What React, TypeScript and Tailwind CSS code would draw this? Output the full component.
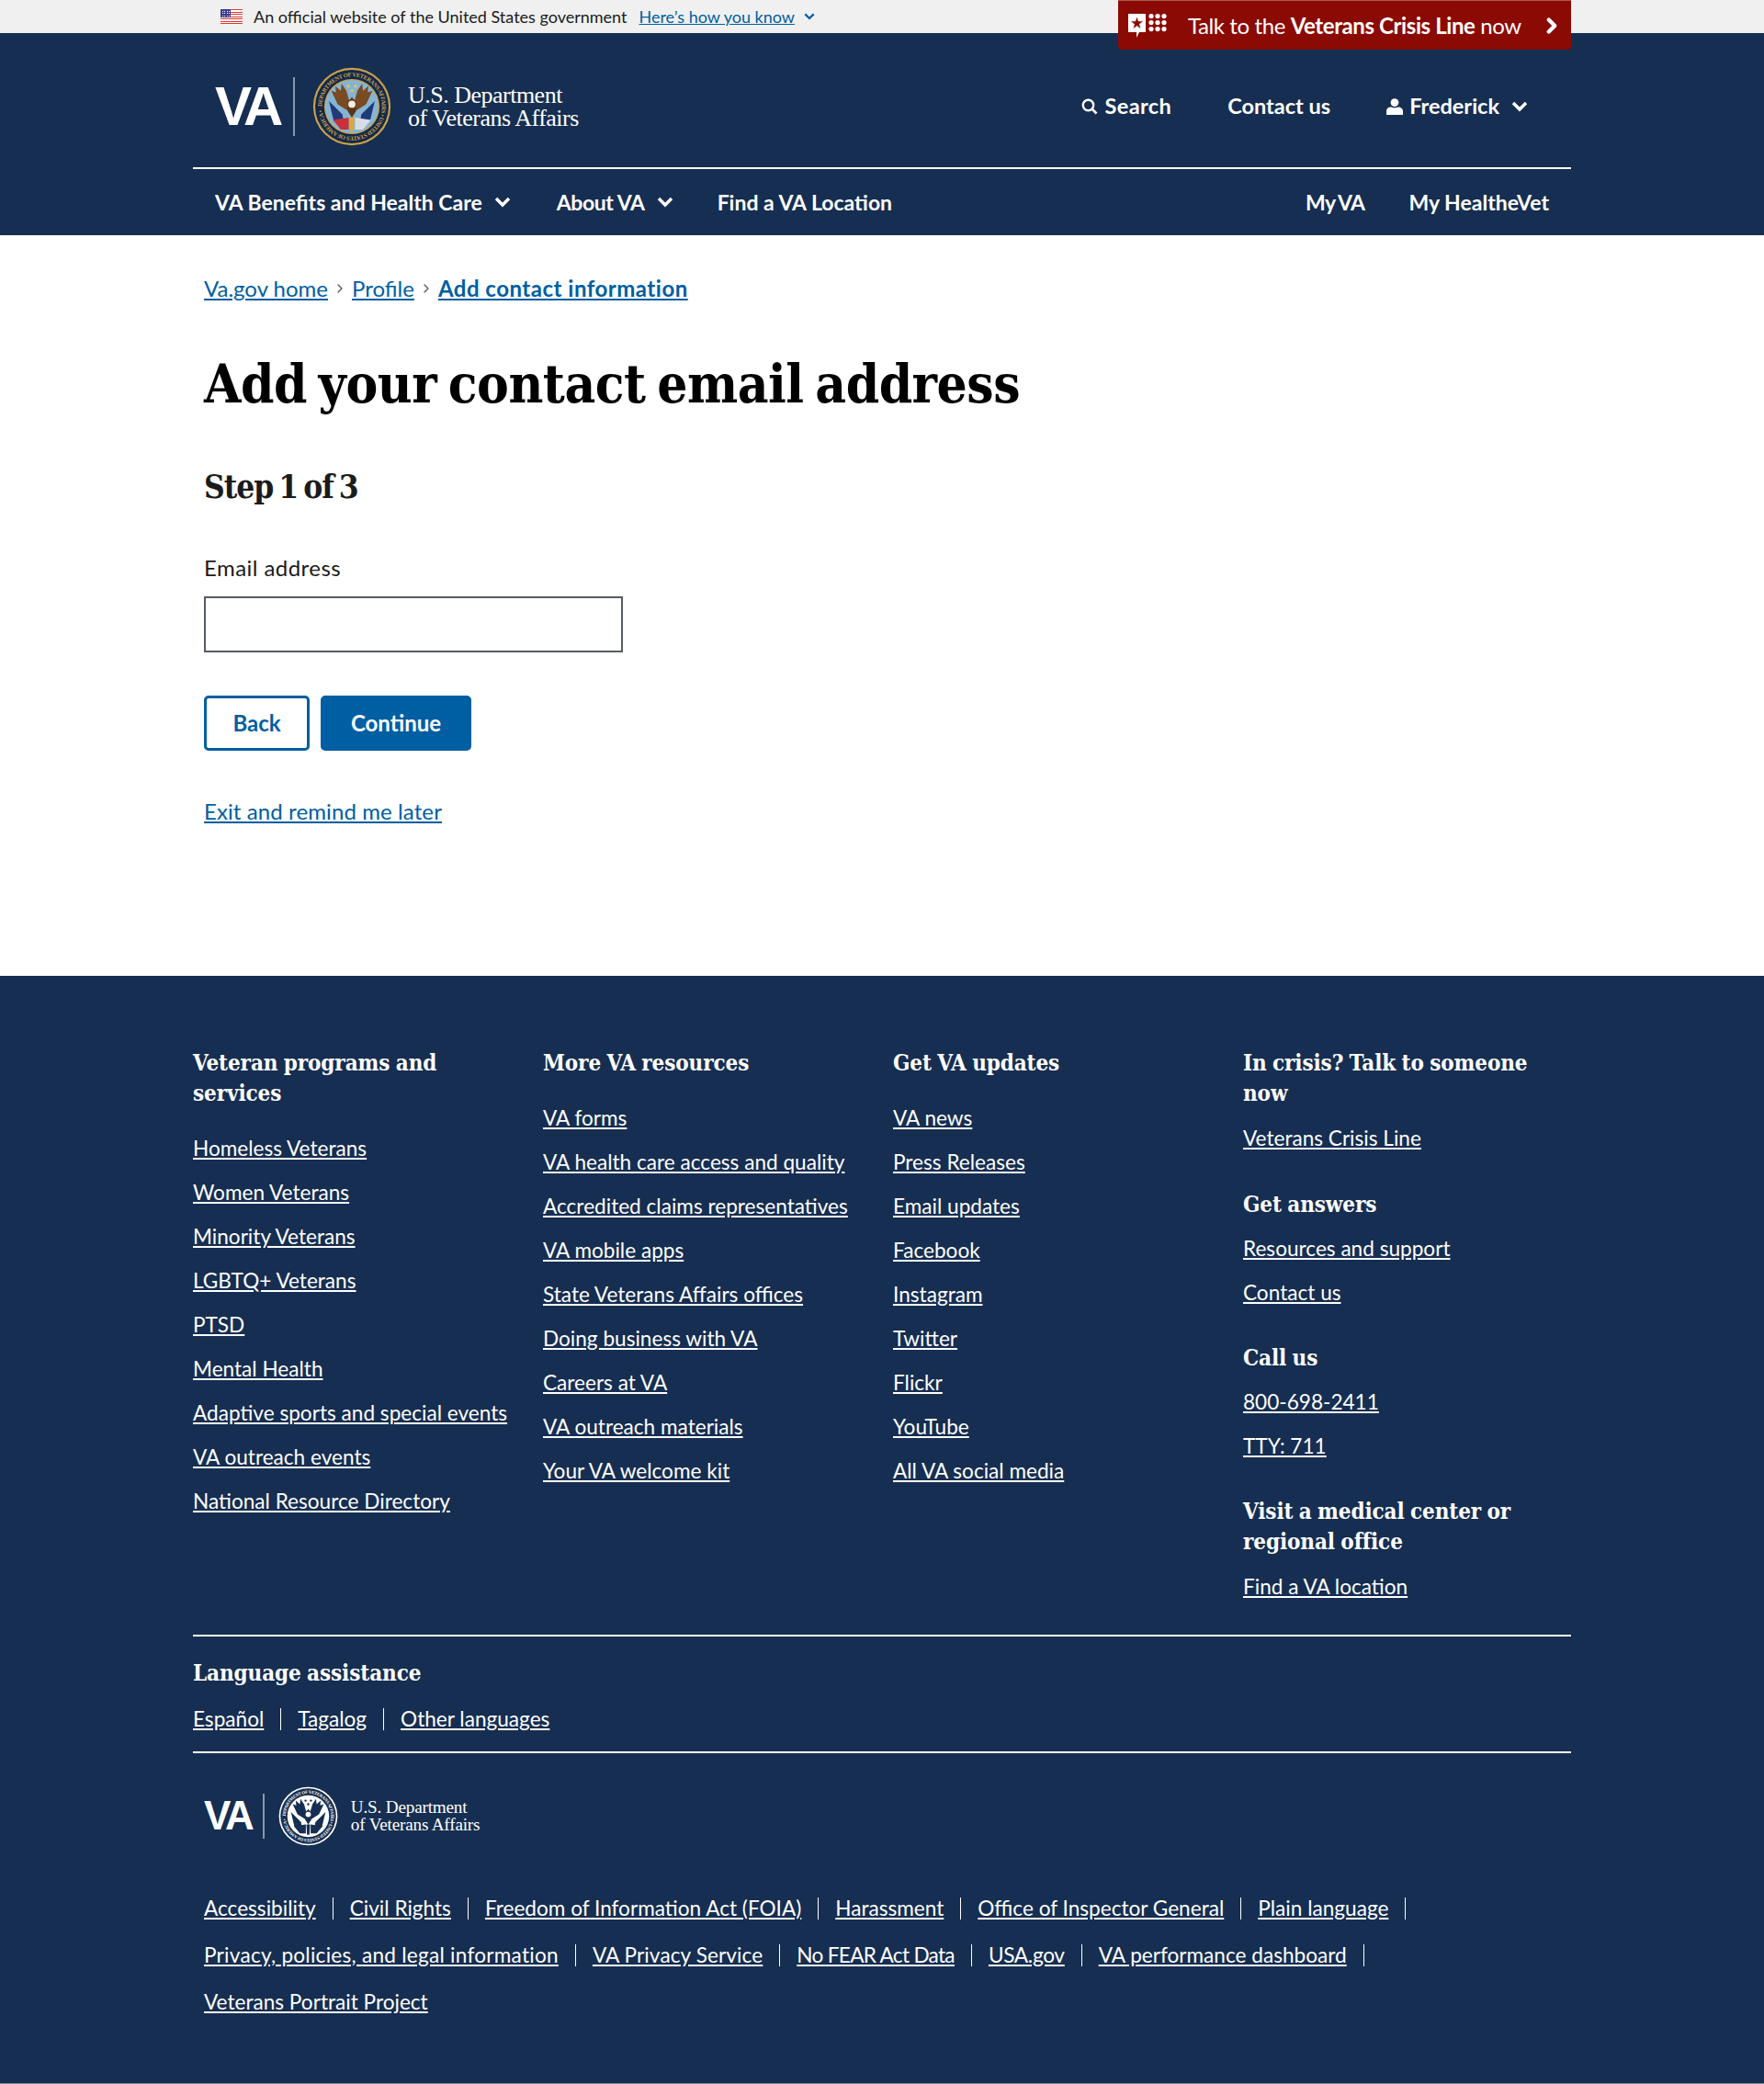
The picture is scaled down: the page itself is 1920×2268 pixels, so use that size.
import React from 'react';
import { ChevronRight } from 'lucide-react';

const SANS = "font-['Lato','Noto_Sans',sans-serif]";
const SERIF = "font-['DejaVu_Serif_Condensed','DejaVu_Serif',serif]";
const LOGO_SERIF = "font-['Liberation_Serif',serif]";

const programs = ['Homeless Veterans', 'Women Veterans', 'Minority Veterans', 'LGBTQ+ Veterans', 'PTSD', 'Mental Health', 'Adaptive sports and special events', 'VA outreach events', 'National Resource Directory'];
const resources = ['VA forms', 'VA health care access and quality', 'Accredited claims representatives', 'VA mobile apps', 'State Veterans Affairs offices', 'Doing business with VA', 'Careers at VA', 'VA outreach materials', 'Your VA welcome kit'];
const updates = ['VA news', 'Press Releases', 'Email updates', 'Facebook', 'Instagram', 'Twitter', 'Flickr', 'YouTube', 'All VA social media'];
const legal = [
  ['Accessibility', 'Civil Rights', 'Freedom of Information Act (FOIA)', 'Harassment', 'Office of Inspector General', 'Plain language'],
  ['Privacy, policies, and legal information', 'VA Privacy Service', 'No FEAR Act Data', 'USA.gov', 'VA performance dashboard'],
];
// Lato runs a bit narrow or wide on these compared with the original face
const legalFit: Record<string, string> = {
  'Privacy, policies, and legal information': 'tracking-[0.25px]',
  'VA Privacy Service': 'tracking-[0.1px]',
  'No FEAR Act Data': 'tracking-[-0.7px]',
  'USA.gov': 'tracking-[-0.3px]',
};

const FootHeading = ({ children, className = '' }: { children: React.ReactNode; className?: string }) => (
  <h2 className={`${SERIF} text-[24px] font-bold leading-[33px] tracking-[-0.1px] [word-spacing:-1px] text-white ${className}`}>{children}</h2>
);

const FootLink = ({ children }: { children: React.ReactNode }) => (
  <li className="flex h-12 items-center pb-[1px]">
    <a className="text-[22.6px] text-white underline underline-offset-2 whitespace-nowrap">{children}</a>
  </li>
);

const FootColumn = ({ title, links }: { title: React.ReactNode; links: string[] }) => (
  <div>
    <FootHeading>{title}</FootHeading>
    <ul className="mt-5">
      {links.map((l) => <FootLink key={l}>{l}</FootLink>)}
    </ul>
  </div>
);

const Chev = ({ className = '' }: { className?: string }) => (
  <svg width="18" height="12" viewBox="0 0 18 12" className={className}>
    <path d="M2 2 L9 9 L16 2" fill="none" stroke="currentColor" strokeWidth="3.4" />
  </svg>
);

const Seal = ({ mono, size }: { mono?: boolean; size: number }) => {
  const ring = mono ? '#ffffff' : '#c9a24a';
  const band = mono ? '#162e51' : '#14284a';
  const inner = mono ? '#ffffff' : '#86b4d4';
  const wing = mono ? '#162e51' : '#7a4a22';
  const id = mono ? 'seal-mono' : 'seal-color';
  return (
    <svg width={size} height={size} viewBox="0 0 100 100">
      <circle cx="50" cy="50" r="49" fill={ring} />
      <circle cx="50" cy="50" r="46.5" fill={band} />
      <circle cx="50" cy="50" r="35" fill={ring} />
      <circle cx="50" cy="50" r="33.5" fill={inner} />
      <defs>
        <path id={id} d="M50 50 m-38 0 a38 38 0 1 1 76 0 a38 38 0 1 1 -76 0" />
      </defs>
      <text fontSize="7.4" fontWeight="700" fill={ring} fontFamily="'Liberation Serif',serif">
        <textPath href={`#${id}`} textLength="234">DEPARTMENT OF VETERANS AFFAIRS • UNITED STATES OF AMERICA •</textPath>
      </text>
      <path d="M21 43 L38 60 L40 72 L27 68 Z" fill={mono ? '#162e51' : '#1f3a78'} />
      <path d="M79 43 L62 60 L60 72 L73 68 Z" fill={mono ? '#162e51' : '#1f3a78'} />
      <path d="M26 67 L46 64 L46 79 L36 79 Z" fill={mono ? '#162e51' : '#c8313a'} />
      <path d="M74 67 L54 64 L54 79 L64 79 Z" fill={mono ? '#162e51' : '#d9dde3'} />
      <path d="M24 30 L30 32 L29 24 L36 30 L37 21 L43 30 L47 44 L50 58 L43 54 L32 47 Z" fill={wing} />
      <path d="M76 30 L70 32 L71 24 L64 30 L63 21 L57 30 L53 44 L50 58 L57 54 L68 47 Z" fill={wing} />
      <path d="M45 44 L50 38 L55 44 L55 56 L50 64 L45 56 Z" fill={mono ? '#162e51' : '#5a3516'} />
      <circle cx="50" cy="47" r="4.5" fill={mono ? '#ffffff' : '#f1efe8'} />
      <path d="M47 64 L53 64 L52 81 L48 81 Z" fill={mono ? '#162e51' : '#e0a92e'} />
      <g fill={mono ? '#162e51' : '#e8c64f'}>
        <circle cx="45.5" cy="24" r="1.8" /><circle cx="54.5" cy="24" r="1.8" /><circle cx="50" cy="30" r="1.8" />
      </g>
    </svg>
  );
};

const Flag = () => (
  <svg width="24" height="16" viewBox="0 0 24 16" shapeRendering="crispEdges">
    <rect width="24" height="16" fill="#fff" />
    {[0, 2.5, 5, 7.5, 10, 12.5, 14.8].map((y) => <rect key={y} y={y} width="24" height="1.2" fill="#d83933" />)}
    <rect width="11" height="8.5" fill="#3c3b8e" />
    <g fill="#fff">
      {[1.5, 4, 6.5].map((y) => [1.5, 4, 6.5, 9].map((x) => <rect key={`${x}-${y}`} x={x} y={y} width="1" height="1" />))}
    </g>
  </svg>
);

const CrisisIcon = () => (
  <svg width="42" height="26" viewBox="0 0 42 26">
    <path d="M0 0 H19 V20 H12 L9 26 V20 H0 Z" fill="#fff" />
    <path d="M9.5 3.5 L11 8.2 H16 L12 11.2 L13.5 16 L9.5 13 L5.5 16 L7 11.2 L3 8.2 H8 Z" fill="#8b0a03" />
    <g fill="#fff">
      {[2.6, 9.6, 16.6].map((y) => [25, 32, 39].map((x) => <circle key={`${x}-${y}`} cx={x} cy={y} r="2.6" />))}
    </g>
  </svg>
);

const SearchIcon = () => (
  <svg width="18" height="18" viewBox="0 0 18 18">
    <circle cx="7.5" cy="7.5" r="5.7" fill="none" stroke="currentColor" strokeWidth="2.4" />
    <path d="M11.5 11.5 L16.5 16.5" stroke="currentColor" strokeWidth="2.6" />
  </svg>
);

const PersonIcon = () => (
  <svg width="18" height="18" viewBox="0 0 18 18" fill="currentColor">
    <circle cx="9" cy="4.6" r="4.4" />
    <path d="M0 18 V14 C0 11 2.5 9.6 5 9.6 C7 10.6 11 10.6 13 9.6 C15.5 9.6 18 11 18 14 V18 Z" />
  </svg>
);

const VaLogo = ({ mono }: { mono?: boolean }) => (
  <div className="flex items-center">
    {mono ? (
      <>
        <span className="font-['Liberation_Sans',sans-serif] text-[44px] font-bold leading-none tracking-[-3px] text-white">VA</span>
        <span className="ml-[12px] mr-[15px] h-[49px] w-[2px] bg-[#8b98ad]" />
        <Seal mono size={65} />
        <div className={`${LOGO_SERIF} ml-[14px] text-[19.2px] leading-[19px] tracking-[-0.2px] text-white`}>
          <div>U.S. Department</div>
          <div>of Veterans Affairs</div>
        </div>
      </>
    ) : (
      <>
        <span className="font-['Liberation_Sans',sans-serif] text-[60px] font-bold leading-none tracking-[-4.5px] text-white">VA</span>
        <span className="ml-[15px] mr-[19px] h-[64px] w-[2px] bg-[#8b98ad]" />
        <Seal size={86} />
        <div className={`${LOGO_SERIF} ml-[18px] text-[26px] leading-[25px] tracking-[-0.5px] text-white`}>
          <div>U.S. Department</div>
          <div>of Veterans Affairs</div>
        </div>
      </>
    )}
  </div>
);

const App: React.FC = () => {
  return (
    <div className={`${SANS} flex min-h-[2268px] flex-col bg-white text-[#1b1b1b]`}>
      {/* gov banner */}
      <div className="h-9 bg-[#f0f0f0]">
        <div className="relative mx-auto w-[1500px]">
          <div className="flex h-9 items-center pl-[30px] text-[18px]">
            <Flag />
            <span className="ml-3">An official website of the United States government</span>
            <a className="ml-[13px] text-[#005ea2] underline">Here’s how you know</a>
            <Chev className="ml-[10px] w-[12px] text-[#005ea2]" />
          </div>
          <a className="absolute right-0 top-0 flex h-[54px] w-[493px] items-center rounded-b-[4px] border-t border-[#a85a55] bg-[#8b0a03] pl-[11px] text-[24px] tracking-[-0.4px] text-white">
            <CrisisIcon />
            <span className="ml-[23px] mt-[1px] whitespace-nowrap">Talk to the <b>Veterans Crisis Line</b> now</span>
            <ChevronRight size={26} strokeWidth={4} className="absolute right-[8px] top-[14px]" />
          </a>
        </div>
      </div>

      {/* header */}
      <header className="bg-[#162e51] text-white">
        <div className="mx-auto w-[1500px]">
          <div className="flex h-[148px] items-center justify-between border-b-2 border-white pl-[24px] pr-[47px] pt-[14px]">
            <VaLogo />
            <div className="flex items-center text-[23.5px] font-bold">
              <a className="flex items-center gap-[7px] tracking-[0.4px]"><SearchIcon />Search</a>
              <a className="ml-[61px]">Contact us</a>
              <a className="ml-[61px] flex items-center gap-[7px]"><PersonIcon />Frederick</a>
              <Chev className="ml-[13px]" />
            </div>
          </div>
          <nav className="flex h-[72px] items-center justify-between px-[24px] text-[23px] font-bold">
            <div className="flex items-center">
              <a>VA Benefits and Health Care</a>
              <Chev className="ml-[13px]" />
              <a className="ml-[50px] tracking-[-0.4px]">About VA</a>
              <Chev className="ml-[13px]" />
              <a className="ml-[48px]">Find a VA Location</a>
            </div>
            <div className="flex items-center gap-[48px]">
              <a className="tracking-[-0.6px] [word-spacing:-1px]">My VA</a>
              <a>My HealtheVet</a>
            </div>
          </nav>
        </div>
      </header>

      {/* main */}
      <main className="mx-auto h-[806px] w-[1500px] px-3 pt-[40px]">
        <div className="flex h-9 items-center text-[24px] text-[#005ea2]">
          <a className="underline">Va.gov home</a>
          <ChevronRight size={16} className="mx-[5px] text-[#565c65]" />
          <a className="underline">Profile</a>
          <ChevronRight size={16} className="mx-[5px] text-[#565c65]" />
          <a className="font-bold tracking-[0.5px] underline">Add contact information</a>
        </div>
        <h1 className={`${SERIF} mt-[47px] text-[58px] font-bold leading-[78px] tracking-[-0.5px] [word-spacing:-5px] text-black`}>Add your contact email address</h1>
        <h2 className={`${SERIF} mt-[48px] text-[35px] font-bold leading-[50px] tracking-[-1px] [word-spacing:-4px] text-[#1b1b1b]`}>Step 1 of 3</h2>
        <label className="mt-[47px] block text-[24px] leading-8 tracking-[0.45px]">Email address</label>
        <input className="mt-[15px] block h-[61px] w-[456px] rounded-none border-2 border-[#565c65] bg-white" />
        <div className="mt-[47px] flex gap-[12px]">
          <button className="h-[60px] w-[115px] rounded-[5px] border-[3px] border-[#005ea2] bg-white text-[24px] font-bold text-[#005ea2]">Back</button>
          <button className="h-[60px] w-[164px] rounded-[5px] bg-[#005ea2] text-[24px] font-bold text-white">Continue</button>
        </div>
        <a className="mt-[50px] block w-fit text-[24px] leading-8 tracking-[0.1px] text-[#005ea2] underline">Exit and remind me later</a>
      </main>

      {/* footer */}
      <footer className="grow border-b border-[#7d8799] bg-[#162e51] pb-[61px] pt-[78px] text-white">
        <div className="mx-auto w-[1500px]">
          <div className="grid grid-cols-[repeat(3,381px)_1fr] border-b-2 border-white pb-[28px]">
            <FootColumn title={<>Veteran programs and<br />services</>} links={programs} />
            <FootColumn title="More VA resources" links={resources} />
            <FootColumn title="Get VA updates" links={updates} />
            <div>
              <FootHeading>In crisis? Talk to someone<br />now</FootHeading>
              <ul className="mt-[9px]"><FootLink>Veterans Crisis Line</FootLink></ul>
              <FootHeading className="mt-[31px]">Get answers</FootHeading>
              <ul className="mt-2"><FootLink>Resources and support</FootLink><FootLink>Contact us</FootLink></ul>
              <FootHeading className="mt-[30px]">Call us</FootHeading>
              <ul className="mt-2"><FootLink>800-698-2411</FootLink><FootLink>TTY: 711</FootLink></ul>
              <FootHeading className="mt-[30px]">Visit a medical center or<br />regional office</FootHeading>
              <ul className="mt-[9px]"><FootLink>Find a VA location</FootLink></ul>
            </div>
          </div>

          <div className="border-b-2 border-white pt-[23px]">
            <FootHeading>Language assistance</FootHeading>
            <div className="flex h-[69px] items-center pb-[1px] text-[22.6px]">
              <a className="underline underline-offset-2">Español</a>
              <span className="mx-[18px] h-[24px] w-px bg-white" />
              <a className="underline underline-offset-2">Tagalog</a>
              <span className="mx-[18px] h-[24px] w-px bg-white" />
              <a className="underline underline-offset-2">Other languages</a>
            </div>
          </div>

          <div className="px-3">
            <div className="flex h-[118px] items-center pt-[18px]">
              <VaLogo mono />
            </div>
            <div className="pt-[25px]">
              {legal.map((row, i) => (
                <div key={i} className="flex h-[51px] items-center text-[22.6px]">
                  {row.map((l) => (
                    <React.Fragment key={l}>
                      <a className={`underline underline-offset-2 whitespace-nowrap ${legalFit[l] ?? ''}`}>{l}</a>
                      <span className="mx-[18px] h-[24px] w-px bg-white" />
                    </React.Fragment>
                  ))}
                </div>
              ))}
              <div className="flex h-[51px] items-center text-[22.6px]">
                <a className="underline underline-offset-2">Veterans Portrait Project</a>
              </div>
            </div>
          </div>
        </div>
      </footer>
    </div>
  );
};

export default App;
